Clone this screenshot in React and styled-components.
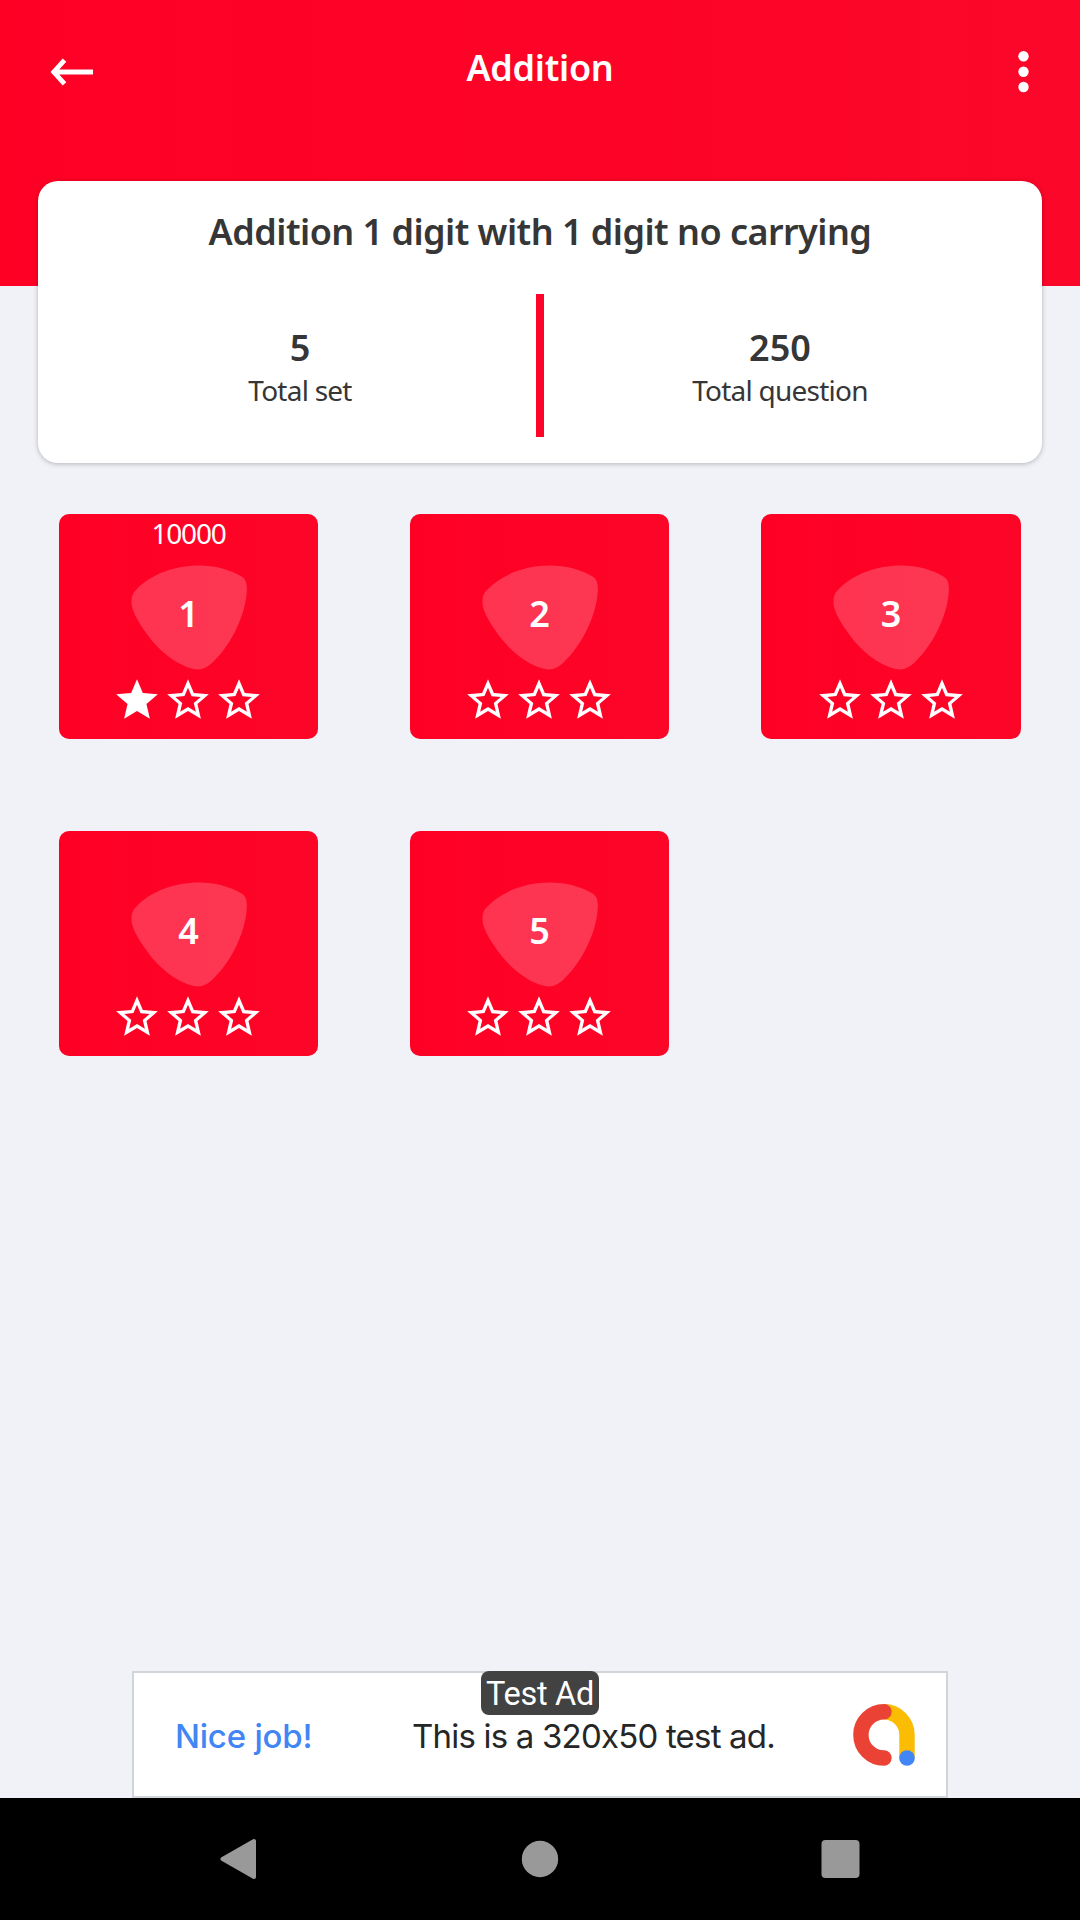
import styled, { createGlobalStyle } from "styled-components";
import { MdStar, MdStarBorder } from "react-icons/md";

const GlobalStyle = createGlobalStyle`
    * {
        box-sizing: border-box;
    }

    body {
        margin: 0;
        background: #f0f2f8;
        color: #363636;
        font-family: "Noto Sans", "Open Sans", sans-serif;
    }
`;

const Screen = styled.div`
    display: flex;
    flex-direction: column;
    width: 1080px;
    height: 1920px;
    overflow: hidden;
`;

const Header = styled.header`
    display: flex;
    justify-content: space-between;
    align-items: flex-start;
    flex: none;
    height: 286px;
    padding: 50px 50px 0;
    background: linear-gradient(to right, #ff0025, #fb0729);
    color: white;
`;

const HeaderIcon = styled.svg`
    width: 44px;
    height: 44px;
`;

const PageTitle = styled.h1`
    margin: -4px 0 0;
    font-size: 36px;
    font-weight: 600;
    line-height: 44px;
    letter-spacing: -0.3px;
`;

const SummaryCard = styled.section`
    display: flex;
    flex-direction: column;
    flex: none;
    height: 282px;
    margin: -105px 38px 0;
    padding: 26px;
    border-radius: 20px;
    background: white;
    box-shadow: 0 1px 5px rgba(0, 0, 0, 0.25);
`;

const SummaryTitle = styled.h2`
    margin: 0;
    font-size: 36px;
    font-weight: 600;
    line-height: 50px;
    text-align: center;
    letter-spacing: -0.54px;
`;

const Stats = styled.div`
    display: flex;
    height: 143px;
    margin-top: 37px;
`;

const Stat = styled.div`
    display: flex;
    flex: 1;
    flex-direction: column;
    align-items: center;
    padding-top: 33px;
`;

const StatValue = styled.span`
    font-size: 36px;
    font-weight: 600;
    line-height: 42px;
`;

const StatLabel = styled.span`
    font-size: 28px;
    line-height: 42px;
    letter-spacing: -0.75px;
`;

const Divider = styled.div`
    width: 8px;
    background: #fd0428;
`;

const Grid = styled.main`
    display: grid;
    grid-template-columns: 259px 259px 260px;
    grid-auto-rows: 225px;
    align-content: start;
    gap: 92px;
    flex: 1;
    padding: 51px 59px 0;
`;

const Tile = styled.div`
    display: flex;
    flex-direction: column;
    align-items: center;
    border-radius: 10px;
    background: linear-gradient(to right, #ff0025, #fc0628);
    color: white;
`;

const Score = styled.span`
    height: 51px;
    font-size: 28px;
    line-height: 39px;
    letter-spacing: -1.2px;
`;

const Badge = styled.div`
    display: grid;
    place-items: center;
    height: 105px;

    > * {
        grid-area: 1 / 1;
    }
`;

const Level = styled.span`
    padding-bottom: 8px;
    font-size: 36px;
    font-weight: 600;
    line-height: 40px;
`;

const Stars = styled.div`
    display: flex;
    gap: 1px;
    margin-top: 5px;
    padding-right: 1px;
    font-size: 50px;
`;

const AdBanner = styled.aside`
    position: relative;
    display: flex;
    align-items: center;
    flex: none;
    width: 816px;
    height: 127px;
    margin: 0 auto;
    padding: 0 31px 0 41px;
    border: 2px solid #cfd5d9;
    background: white;
    font-family: Inter, sans-serif;
    font-size: 33px;
    white-space: nowrap;
`;

const AdBadge = styled.span`
    position: absolute;
    top: -2px;
    left: 347px;
    width: 118px;
    height: 44px;
    border-radius: 8px;
    background: #424242;
    color: white;
    font-family: Roboto, sans-serif;
    font-size: 32.5px;
    line-height: 47px;
    letter-spacing: -0.3px;
    text-align: center;
`;

const AdHeadline = styled.span`
    width: 237px;
    padding-top: 2px;
    color: #4285f4;
    font-weight: 500;
    letter-spacing: -0.2px;
`;

const AdText = styled.span`
    flex: 1;
    padding-top: 2px;
    color: #262626;
    letter-spacing: -0.8px;
`;

const NavBar = styled.nav`
    display: flex;
    justify-content: center;
    align-items: center;
    gap: 260px;
    flex: none;
    height: 122px;
    background: black;
`;

const levels = [
    { id: 1, score: 10000, stars: 1 },
    { id: 2, stars: 0 },
    { id: 3, stars: 0 },
    { id: 4, stars: 0 },
    { id: 5, stars: 0 },
];

function LevelTile({ id, score, stars }) {
    return (
        <Tile>
            <Score>{score}</Score>
            <Badge>
                <svg width="118" height="105" viewBox="0 0 118 105">
                    <path
                        d="M1.5 38C1.3 32 2.5 28 6 25C21 9 45 0.6 69 0.6C84 0.6 100 4.5 111.5 11.5C115.5 14 116.6 17 116.8 23C117 46 103 78 83 97C75 104.5 69 106.5 57 102C39 95 24 80 14 65C6 53 1.8 45 1.5 38Z"
                        fill="white"
                        fillOpacity="0.2"
                    />
                </svg>
                <Level>{id}</Level>
            </Badge>
            <Stars>
                {[0, 1, 2].map((n) =>
                    n < stars ? <MdStar key={n} /> : <MdStarBorder key={n} />
                )}
            </Stars>
        </Tile>
    );
}

function AdLogo() {
    return (
        <svg width="62" height="62" viewBox="0 0 62 62" fill="none">
            <path
                d="M31 7.8A23 23 0 0 1 54 31V54"
                stroke="#fbbc04"
                strokeWidth="15.4"
            />
            <path
                d="M31 7.8A23.1 23.1 0 0 0 31 54"
                stroke="#ea4335"
                strokeWidth="15.4"
                strokeLinecap="round"
            />
            <circle cx="54" cy="54" r="7.8" fill="#4285f4" />
        </svg>
    );
}

function App() {
    return (
        <>
            <GlobalStyle />
            <Screen>
                <Header>
                    <HeaderIcon viewBox="0 0 44 44">
                        <path
                            d="M43 22H5M14.5 10.2L3.8 22L14.5 33.8"
                            fill="none"
                            stroke="white"
                            strokeWidth="4.8"
                        />
                    </HeaderIcon>
                    <PageTitle>Addition</PageTitle>
                    <HeaderIcon viewBox="0 0 44 44" fill="white">
                        <circle cx="37.5" cy="6.2" r="5.2" />
                        <circle cx="37.5" cy="21.8" r="5.2" />
                        <circle cx="37.5" cy="37" r="5.2" />
                    </HeaderIcon>
                </Header>
                <SummaryCard>
                    <SummaryTitle>
                        Addition 1 digit with 1 digit no carrying
                    </SummaryTitle>
                    <Stats>
                        <Stat>
                            <StatValue>5</StatValue>
                            <StatLabel>Total set</StatLabel>
                        </Stat>
                        <Divider />
                        <Stat>
                            <StatValue>250</StatValue>
                            <StatLabel>Total question</StatLabel>
                        </Stat>
                    </Stats>
                </SummaryCard>
                <Grid>
                    {levels.map((level) => (
                        <LevelTile key={level.id} {...level} />
                    ))}
                </Grid>
                <AdBanner>
                    <AdBadge>Test Ad</AdBadge>
                    <AdHeadline>Nice job!</AdHeadline>
                    <AdText>This is a 320x50 test ad.</AdText>
                    <AdLogo />
                </AdBanner>
                <NavBar>
                    <svg width="40" height="44" viewBox="0 0 40 44">
                        <path
                            d="M2.5 22L34 4V40Z"
                            fill="#999"
                            stroke="#999"
                            strokeWidth="4"
                            strokeLinejoin="round"
                        />
                    </svg>
                    <svg width="40" height="44" viewBox="0 0 40 44">
                        <circle cx="20" cy="22" r="18.2" fill="#999" />
                    </svg>
                    <svg width="40" height="44" viewBox="0 0 40 44">
                        <rect x="1.5" y="3" width="38" height="38" rx="4" fill="#999" />
                    </svg>
                </NavBar>
            </Screen>
        </>
    );
}

export default App;
